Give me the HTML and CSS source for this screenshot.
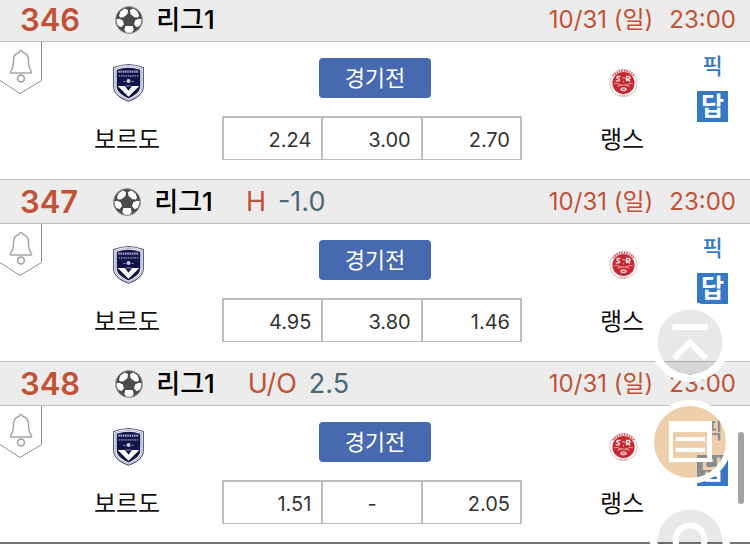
FILE: index.html
```html
<!DOCTYPE html>
<html lang="ko">
<head>
<meta charset="utf-8">
<meta name="viewport" content="width=device-width, initial-scale=1">
<title>리그1</title>
<link rel="stylesheet" href="styles.css">
</head>
<body>
<svg class="sprite" aria-hidden="true">
  <symbol id="ball" viewBox="0 0 28 28">
    <circle cx="14" cy="14" r="13.500" fill="#4b4b4b" stroke="#9a9a9a"/>
    <g fill="#fff">
      <path d="M4 9.500 5.500 5.500 9.500 2.500 13 4 12.500 8 8.500 11.300 5 11.500Z"/>
      <path d="M24 9.500 22.500 5.500 18.500 2.500 15 4 15.500 8 19.500 11.300 23 11.500Z"/>
      <path d="M1.200 13.500 4 12.700 7.700 14.300 9 18.300 6.300 21.200 2.800 19.500Z"/>
      <path d="M26.800 13.500 24 12.700 20.300 14.300 19 18.300 21.700 21.200 25.200 19.500Z"/>
      <path d="M10.300 20H17.700L18.700 24.300 16.300 26.800H11.700L9.300 24.300Z"/>
    </g>
  </symbol>
  <symbol id="bell" viewBox="0 0 42 53">
    <path d="M0 38.500 20 51.500 41.500 38.500V0" fill="none" stroke="#8f8f8f"/>
    <path d="M20.800 8.500c-1 0-1.300.8-1.500 1.700-3.600 1-5.800 4-5.800 8 0 6-.5 8-2.500 10.500-.8.800-.8 2.300 0 2.300h20c.8 0 .8-1.500 0-2.300-2-2.500-2.500-4.500-2.500-10.500 0-4-2.200-7-5.800-8-.2-.9-.6-1.700-1.900-1.700Z" fill="none" stroke="#a6a6a6" stroke-width="1.500"/>
    <circle cx="21" cy="36.500" r="3.400" fill="none" stroke="#a6a6a6" stroke-width="1.700"/>
  </symbol>
  <symbol id="bordeaux" viewBox="0 0 30 37">
    <path d="M.5 3.500Q7 .7 15 .5 23 .7 29.500 3.500V22Q29.500 31 15 36.300.500 31 .5 22Z" fill="#fff" stroke="#4a4e7a"/>
    <path d="M2 4.700Q8 2.500 15 2.500T28 4.700V22Q28 29.500 15 34.800 2 29.500 2 22Z" fill="#fff" stroke="#9296b4" stroke-width=".8"/>
    <path d="M3.500 5.500Q9 3.700 15 3.700T26.500 5.500V22Q26.500 28.500 15 33.500 3.500 28.500 3.500 22Z" fill="#11134a"/>
    <path d="M4.500 21.500H11.500L15 26 18.500 21.500H25.500L15 32Z" fill="#fff"/>
    <path d="M5 7.500H25" stroke="#a9acc6" stroke-width="2.200" stroke-dasharray="1.500 .7"/>
    <path d="M5.500 11.500H24.500" stroke="#777a9e" stroke-width="1.700" stroke-dasharray="1.400 .8"/>
    <circle cx="15" cy="16.500" r="2" fill="#c9cbdc"/>
    <path d="M10 17h2m6 0h2M12.500 21.500h5" stroke="#8c8fae"/>
  </symbol>
  <symbol id="reims" viewBox="0 0 28 28">
    <circle cx="14" cy="14" r="13.300" fill="#fff" stroke="#e6abb0" stroke-width=".8"/>
    <path d="M4 7.500A12 12 0 0 1 24 7.500" fill="none" stroke="#cf6068" stroke-width="2" stroke-dasharray="1.500 .9"/>
    <path d="M10.500 25.500Q14 26.500 17.500 25.500" fill="none" stroke="#df969b" stroke-width="1.300" stroke-dasharray="1.300 .7"/>
    <circle cx="14" cy="14" r="10.700" fill="#c8272f"/>
    <path d="M11 7.700H8.200Q6.700 9.300 9 10T9.500 12H6.500M17 12.300V7.700h2.500q2 1.300-.5 2.500h-2l3.500 2.200" fill="none" stroke="#fae7e8" stroke-width="1.300"/>
    <path d="M12.500 9h3M14 12v1.500M5 14.700Q9 13.500 11 16h6q2-2.500 6-1.300M8 17q3 0 4.500-1.500M20 17q-3 0-4.500-1.500" fill="none" stroke="#eaa9ad" stroke-width=".9"/>
    <ellipse cx="14" cy="20" rx="3" ry="2" fill="#f4d4d6"/>
    <path d="M12.500 20h3" stroke="#c8272f"/>
  </symbol>
</svg>

<main class="matches">
  <article class="match">
    <header class="match-head">
      <span class="number">346</span>
      <svg class="ball"><use href="#ball"/></svg>
      <h2 class="league">리그1</h2>
      <time class="when"><span>10/31 (일)</span><span>23:00</span></time>
    </header>
    <div class="match-body">
      <button class="alarm" aria-label="알림"><svg><use href="#bell"/></svg></button>
      <div class="team home"><svg class="crest bordeaux"><use href="#bordeaux"/></svg><span>보르도</span></div>
      <div class="center">
        <button class="status">경기전</button>
        <table class="odds"><tr><td>2.24</td><td>3.00</td><td>2.70</td></tr></table>
      </div>
      <div class="team away"><svg class="crest reims"><use href="#reims"/></svg><span>랭스</span></div>
      <div class="picks"><button class="pick">픽</button><button class="answer">답</button></div>
    </div>
  </article>

  <article class="match">
    <header class="match-head">
      <span class="number">347</span>
      <svg class="ball"><use href="#ball"/></svg>
      <h2 class="league">리그1</h2>
      <span class="line"><span class="kind">H</span><span>-1.0</span></span>
      <time class="when"><span>10/31 (일)</span><span>23:00</span></time>
    </header>
    <div class="match-body">
      <button class="alarm" aria-label="알림"><svg><use href="#bell"/></svg></button>
      <div class="team home"><svg class="crest bordeaux"><use href="#bordeaux"/></svg><span>보르도</span></div>
      <div class="center">
        <button class="status">경기전</button>
        <table class="odds"><tr><td>4.95</td><td>3.80</td><td>1.46</td></tr></table>
      </div>
      <div class="team away"><svg class="crest reims"><use href="#reims"/></svg><span>랭스</span></div>
      <div class="picks"><button class="pick">픽</button><button class="answer">답</button></div>
    </div>
  </article>

  <article class="match">
    <header class="match-head">
      <span class="number">348</span>
      <svg class="ball"><use href="#ball"/></svg>
      <h2 class="league">리그1</h2>
      <span class="line"><span class="kind">U/O</span><span>2.5</span></span>
      <time class="when"><span>10/31 (일)</span><span>23:00</span></time>
    </header>
    <div class="match-body">
      <button class="alarm" aria-label="알림"><svg><use href="#bell"/></svg></button>
      <div class="team home"><svg class="crest bordeaux"><use href="#bordeaux"/></svg><span>보르도</span></div>
      <div class="center">
        <button class="status">경기전</button>
        <table class="odds"><tr><td>1.51</td><td class="none">-</td><td>2.05</td></tr></table>
      </div>
      <div class="team away"><svg class="crest reims"><use href="#reims"/></svg><span>랭스</span></div>
      <div class="picks"><button class="pick">픽</button><button class="answer">답</button></div>
    </div>
  </article>
</main>

<nav class="floating" aria-label="빠른 메뉴">
  <button class="round" aria-label="맨 위로">
    <svg viewBox="0 0 80 80">
      <path fill="#fff" fill-rule="evenodd" d="M40 0a40 40 0 1 0 0 80 40 40 0 1 0 0-80ZM40 7.500a32.500 32.500 0 1 1 0 65 32.500 32.500 0 1 1 0-65Z"/>
      <circle cx="40" cy="40" r="32.500" fill="#000" fill-opacity=".09"/>
      <path d="M22.500 25H57.500M24 56.500 40 40.500 56 56.500" fill="none" stroke="#fff" stroke-width="6"/>
    </svg>
  </button>
  <button class="round large" aria-label="목록">
    <svg viewBox="0 0 84 84">
      <path fill="#fff" fill-rule="evenodd" d="M42 0a42 42 0 1 0 0 84 42 42 0 1 0 0-84ZM42 6a36 36 0 1 1 0 72 36 36 0 1 1 0-72Z"/>
      <circle cx="42" cy="42" r="36" fill="#dba157" fill-opacity=".5"/>
      <path fill="#fff" fill-rule="evenodd" d="M21 21H64V62H21ZM25 32V58H59V32Z"/>
      <path d="M28 39H57M28 50H57" stroke="#fff" stroke-width="4"/>
    </svg>
  </button>
  <button class="round" aria-label="검색">
    <svg viewBox="0 0 80 80">
      <path fill="#fff" fill-rule="evenodd" d="M40 0a40 40 0 1 0 0 80 40 40 0 1 0 0-80ZM40 7.500a32.500 32.500 0 1 1 0 65 32.500 32.500 0 1 1 0-65Z"/>
      <circle cx="40" cy="40" r="32.500" fill="#000" fill-opacity=".09"/>
      <circle cx="40" cy="38" r="14.500" fill="none" stroke="#fff" stroke-width="6"/>
    </svg>
  </button>
</nav>
<div class="scroll-thumb"></div>
</body>
</html>
```
FILE: styles.css
```css
* {
  box-sizing: border-box;
}

body {
  margin: 0;
  overflow: hidden;
  background: #fff;
  color: #111;
  font-family: Inter, "Noto Sans CJK KR", sans-serif;
}

button {
  margin: 0;
  padding: 0;
  border: 0;
  background: none;
  font-family: inherit;
}

.sprite {
  position: absolute;
  width: 0;
  height: 0;
}

/* The list is scrolled slightly past the first header's top edge. */
.matches {
  margin-top: -3px;
  border-bottom: 2px solid #777;
}

.match-head {
  display: flex;
  align-items: center;
  height: 45px;
  padding: 0 14px 0 20px;
  border-top: 1px solid #bdbdbd;
  border-bottom: 1px solid #bdbdbd;
  background: #ececec;
  line-height: 42px;
  white-space: nowrap;
}

.number {
  color: #c25236;
  font-size: 31px;
  font-weight: 600;
}

.ball {
  width: 28px;
  height: 28px;
  margin: 0 13px 0 35px;
}

.league {
  margin: 0;
  color: #000;
  font-size: 26px;
  font-weight: 500;
}

.line {
  display: flex;
  gap: 12px;
  margin-left: 33px;
  color: #49697b;
  font-size: 27px;
}

.kind {
  color: #c25236;
}

.when {
  display: flex;
  gap: 16px;
  margin-left: auto;
  color: #c25236;
  font-size: 24px;
}

.match-body {
  display: grid;
  grid-template-columns: 42px 180fr 306px 169fr 53px;
  height: 137px;
}

.match:last-child .match-body {
  height: 136px;
}

.alarm {
  align-self: start;
  width: 42px;
  height: 53px;
}

.alarm svg {
  display: block;
  width: 42px;
  height: 53px;
}

.team {
  display: flex;
  flex-direction: column;
  align-items: center;
  padding-top: 22px;
  font-size: 24px;
  line-height: 36px;
}

.home {
  padding-right: 10px;
}

.away {
  padding-left: 19px;
}

.crest {
  height: 38px;
  margin: 0 0 20px 3px;
}

.bordeaux {
  width: 31px;
}

.reims {
  width: 29px;
}

.center {
  display: flex;
  flex-direction: column;
  align-items: center;
  gap: 18px;
  padding-top: 16px;
}

.status {
  width: 112px;
  height: 40px;
  border-radius: 4px;
  background: #4769b0;
  color: #fff;
  font-size: 22px;
  line-height: 36px;
}

.odds {
  width: 300px;
  height: 44px;
  margin-right: 6px;
  border-collapse: collapse;
  table-layout: fixed;
}

.odds td {
  padding: 2px 10px 0;
  border: 2px solid #bdbdbd;
  border-bottom-width: 1px;
  color: #333;
  font-size: 20px;
  text-align: right;
}

.odds .none {
  text-align: center;
}

.picks {
  display: flex;
  flex-direction: column;
  align-items: flex-start;
  gap: 9px;
  padding-top: 8px;
}

.pick,
.answer {
  width: 31px;
  color: #3478c6;
  font-size: 22px;
  font-weight: 500;
  line-height: 32px;
}

.answer {
  height: 31px;
  background: #3478c6;
  color: #fff;
  font-size: 25px;
  font-weight: 700;
  line-height: 31px;
}

.floating {
  position: fixed;
  top: 302px;
  right: 18px;
  display: flex;
  flex-direction: column;
  align-items: center;
  gap: 18px;
}

.round {
  width: 80px;
  height: 80px;
  border-radius: 50%;
}

.large {
  width: 84px;
  height: 84px;
}

.round svg {
  display: block;
}

.scroll-thumb {
  position: fixed;
  top: 432px;
  right: 6px;
  width: 6px;
  height: 72px;
  border-radius: 3px;
  background: #a3a3a3;
}
```
